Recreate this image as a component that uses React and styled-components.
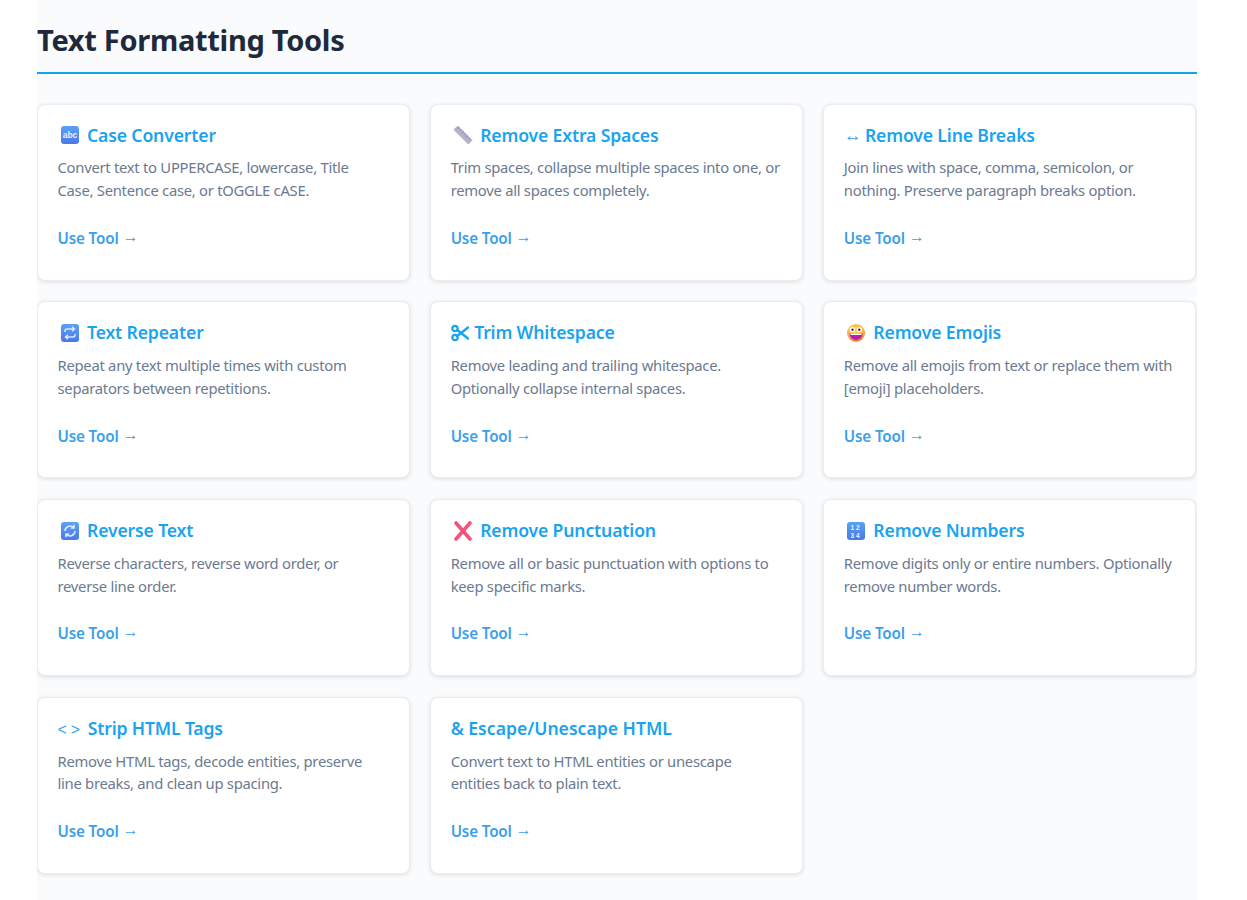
import React from "react";
import styled, { createGlobalStyle } from "styled-components";

const Global = createGlobalStyle`
  html, body { margin: 0; padding: 0; background: #fff; }
  body { font-family: "Noto Sans", sans-serif; }
`;
const Page = styled.main`
  width: 1159.5px; height: 900px; margin-left: 37px; background: #f9fbfd; overflow: hidden;
`;
const Title = styled.h2`
  margin: 0 0 29.75px; padding: 20px 0 12px; height: 40px; font-size: 29px; line-height: 40px; font-weight: 700;
  letter-spacing: -0.3px; color: #1e293b; border-bottom: 2px solid #0ea5e9;
`;
const Grid = styled.div`
  display: grid; grid-template-columns: repeat(3, 1fr); column-gap: 20px; row-gap: 20.7px; grid-auto-rows: 177px;
`;
const Card = styled.article`
  box-sizing: border-box; background: #fff; border: 1px solid #e9edf2; border-radius: 8px;
  padding: 19px 20px 19px 19.5px; box-shadow: 0 1px 4px rgba(0,0,0,.12); display: flex; flex-direction: column;
`;
const CardTitle = styled.h3`
  margin: 0 0 9.7px; display: flex; align-items: center; gap: 5.5px; font-size: 17.6px; line-height: 23px;
  font-weight: 600; color: #1aa3ee;
`;
const Name = styled.span`
  letter-spacing: ${p => p.$loose ? "0" : "-0.15px"};
`;
const Glyph = styled.span`
  font-weight: 400;
  font-size: ${p => p.$size || "17.6px"};
  line-height: 17px;
  letter-spacing: ${p => p.$spread || "0"};
  margin-right: ${p => p.$pull || "0"};
  padding-top: ${p => p.$drop || "0"};
  color: #3f9fe6;
  font-family: "Liberation Sans", sans-serif;
`;
const IconSlot = styled.svg`
  width: ${p => p.$w || 24}px; height: 20px; flex: none;
`;
const Desc = styled.p`
  margin: 0; max-width: 329.5px; font-size: 14.8px; line-height: 22.8px; letter-spacing: -0.27px; color: #6b7a90;
`;
const Link = styled.a`
  margin-top: 24.8px; font-size: 15.2px; line-height: 20px; font-weight: 600; letter-spacing: -0.15px; color: #3ba0ea;
`;
const LinkArrow = styled.span`
  font-family: "Liberation Sans", sans-serif; font-weight: 400; font-size: 16px; vertical-align: 1.5px;
`;

const Square = ({ id, children }) => (
  <IconSlot viewBox="0 0 24 20">
    <defs>
      <linearGradient id={id} x1="0" y1="0" x2="0" y2="1">
        <stop offset="0" stopColor="#5aa2f5" />
        <stop offset="1" stopColor="#4a78e8" />
      </linearGradient>
    </defs>
    <rect x="3" y="1" width="18" height="18" rx="3" fill={`url(#${id})`} />
    {children}
  </IconSlot>
);
const Abc = () => (
  <Square id="g-abc">
    <text x="12" y="13" textAnchor="middle" fontSize="8.5" fontFamily="Liberation Sans" fill="#e8f1ff">abc</text>
  </Square>
);
const Ruler = () => (
  <IconSlot viewBox="0 0 24 20">
    <g transform="rotate(45 12 10)">
      <rect x="1.5" y="7" width="21" height="6" fill="#b5b3c4" />
      <path d="M4 7v2.5M7 7v2M10 7v2.5M13 7v2M16 7v2.5M19 7v2" stroke="#8f86c9" strokeWidth="1" />
    </g>
  </IconSlot>
);
const Repeat = () => (
  <Square id="g-rep">
    <path d="M7 9V8a2 2 0 0 1 2-2h6.5M14 3.8 16.5 6 14 8.2M17 11v1a2 2 0 0 1-2 2H8.5M10 11.8 7.5 14l2.5 2.2" fill="none" stroke="#dfe9ff" strokeWidth="1.5" />
  </Square>
);
const Reverse = () => (
  <Square id="g-rev">
    <path d="M7 10a5 5 0 0 1 8.5-3.5M16 3.8V7h-3.2M17 10a5 5 0 0 1-8.5 3.5M8 16.2V13h3.2" fill="none" stroke="#dfe9ff" strokeWidth="1.6" />
  </Square>
);
const Cross = () => (
  <IconSlot viewBox="0 0 24 20">
    <path d="M5 2 19 18M19 2 5 18" stroke="#f5527c" strokeWidth="3.6" strokeLinecap="round" />
  </IconSlot>
);
const Numbers = () => (
  <Square id="g-num">
    <text x="12" y="9" textAnchor="middle" fontSize="6.5" letterSpacing="2" fontFamily="Liberation Sans" fill="#eef4ff">12</text>
    <text x="12" y="16.5" textAnchor="middle" fontSize="6.5" letterSpacing="2" fontFamily="Liberation Sans" fill="#eef4ff">34</text>
  </Square>
);
const Scissors = () => (
  <IconSlot $w={18} viewBox="0 0 18 20">
    <g fill="none" stroke="#1aa3ee">
      <circle cx="4" cy="5.5" r="2.7" strokeWidth="2.2" />
      <circle cx="4" cy="14.5" r="2.7" strokeWidth="2.2" />
      <path d="M6.2 7 17 15.5M6.2 13 17 4.5" strokeWidth="2.4" strokeLinecap="round" />
    </g>
  </IconSlot>
);
const Face = () => (
  <IconSlot viewBox="0 0 24 20">
    <defs>
      <radialGradient id="g-face" cx="0.45" cy="0.35" r="0.7">
        <stop offset="0" stopColor="#ffd85c" />
        <stop offset="0.65" stopColor="#fdb04a" />
        <stop offset="1" stopColor="#ee6a4e" />
      </radialGradient>
    </defs>
    <circle cx="12" cy="10" r="9" fill="url(#g-face)" />
    <circle cx="8.3" cy="6.5" r="2.6" fill="#fff" />
    <circle cx="15.5" cy="6.5" r="2.6" fill="#fff" />
    <circle cx="8.5" cy="6.7" r="1.2" fill="#40312c" />
    <circle cx="15.3" cy="6.7" r="1.2" fill="#40312c" />
    <path d="M5.5 10.5h13c0 4-3 6.5-6.5 6.5s-6.5-2.5-6.5-6.5z" fill="#b81fa8" />
    <path d="M6.5 10.5h11v1.5h-11z" fill="#fff" />
  </IconSlot>
);

const tools = [
  [<Abc />, "Case Converter", "Convert text to UPPERCASE, lowercase, Title Case, Sentence case, or tOGGLE cASE."],
  [<Ruler />, "Remove Extra Spaces", "Trim spaces, collapse multiple spaces into one, or remove all spaces completely."],
  [<Glyph $pull="-2px">↔</Glyph>, "Remove Line Breaks", "Join lines with space, comma, semicolon, or nothing. Preserve paragraph breaks option."],
  [<Repeat />, "Text Repeater", "Repeat any text multiple times with custom separators between repetitions."],
  [<Scissors />, "Trim Whitespace", "Remove leading and trailing whitespace. Optionally collapse internal spaces."],
  [<Face />, "Remove Emojis", "Remove all emojis from text or replace them with [emoji] placeholders."],
  [<Reverse />, "Reverse Text", "Reverse characters, reverse word order, or reverse line order."],
  [<Cross />, "Remove Punctuation", "Remove all or basic punctuation with options to keep specific marks."],
  [<Numbers />, "Remove Numbers", "Remove digits only or entire numbers. Optionally remove number words."],
  [<Glyph $size="16px" $spread="4px" $pull="-2px" $drop="3px">&lt;&gt;</Glyph>, "Strip HTML Tags", "Remove HTML tags, decode entities, preserve line breaks, and clean up spacing."],
  [null, "& Escape/Unescape HTML", "Convert text to HTML entities or unescape entities back to plain text.", true],
];

export default function App() {
  return (
    <Page>
      <Global />
      <Title>Text Formatting Tools</Title>
      <Grid>
        {tools.map(([icon, name, desc, loose]) => (
          <Card key={name}>
            <CardTitle>{icon}<Name $loose={loose}>{name}</Name></CardTitle>
            <Desc>{desc}</Desc>
            <Link>Use Tool <LinkArrow>→</LinkArrow></Link>
          </Card>
        ))}
      </Grid>
    </Page>
  );
}
